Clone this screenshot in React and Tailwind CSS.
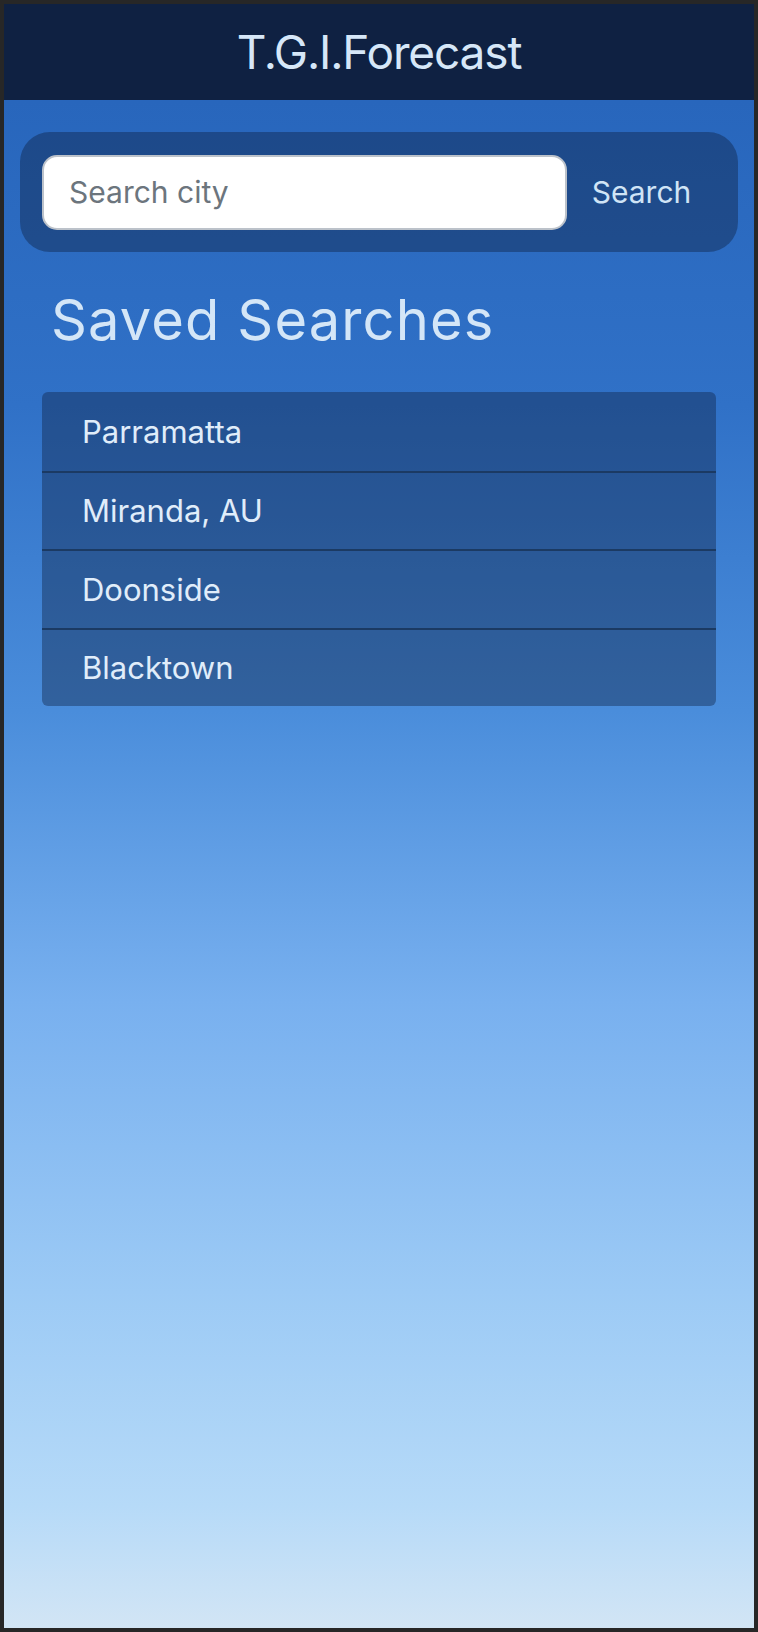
import React from "react";

const cities = ["Parramatta", "Miranda, AU", "Doonside", "Blacktown"];

export default function App() {
  return (
    <div className="h-[1632px] w-full bg-[#272727] p-[4px] font-[Inter,sans-serif]">
      <div className="flex h-full flex-col overflow-hidden">
        <header className="flex h-[96px] shrink-0 items-center justify-center bg-[#0f2142]">
          <h1 className="text-[46px] leading-none tracking-[-0.025em] text-[#d6e7f8]">
            T.G.I.Forecast
          </h1>
        </header>
        <main className="flex-1 bg-[linear-gradient(180deg,#2866bc_0%,#3071c7_20%,#4a8ddb_40%,#78b0ef_59%,#9ccaf5_78%,#b6daf8_92%,#d2e5f5_100%)] px-[16px] pt-[32px]">
          <form
            className="flex h-[120px] items-center rounded-[30px] bg-[#0f2142]/[0.42] px-[22px]"
            onSubmit={(e) => e.preventDefault()}
          >
            <input
              type="text"
              placeholder="Search city"
              className="h-[75px] flex-1 rounded-[15px] border-2 border-[#bcc2ca] bg-white px-[25px] text-[30px] leading-none text-[#212529] outline-none placeholder:text-[#6c757d]"
            />
            <button
              type="submit"
              className="w-[149px] text-center text-[30px] leading-none text-[#d0e4f6]"
            >
              Search
            </button>
          </form>
          <h2 className="mt-[40px] pl-[31px] text-[56px] leading-none tracking-[0.02em] text-[#d4e6f7]">
            Saved Searches
          </h2>
          <ul className="mx-[22px] mt-[44px] overflow-hidden rounded-[6px] bg-[#0f2142]/[0.4]">
            {cities.map((c, i) => (
              <li
                key={c}
                className={`flex h-[78.5px] items-center px-[40px] text-[31px] leading-none text-[#e0edfa] ${
                  i > 0 ? "border-t-2 border-[#1b3a63]" : ""
                }`}
              >
                {c}
              </li>
            ))}
          </ul>
        </main>
      </div>
    </div>
  );
}
